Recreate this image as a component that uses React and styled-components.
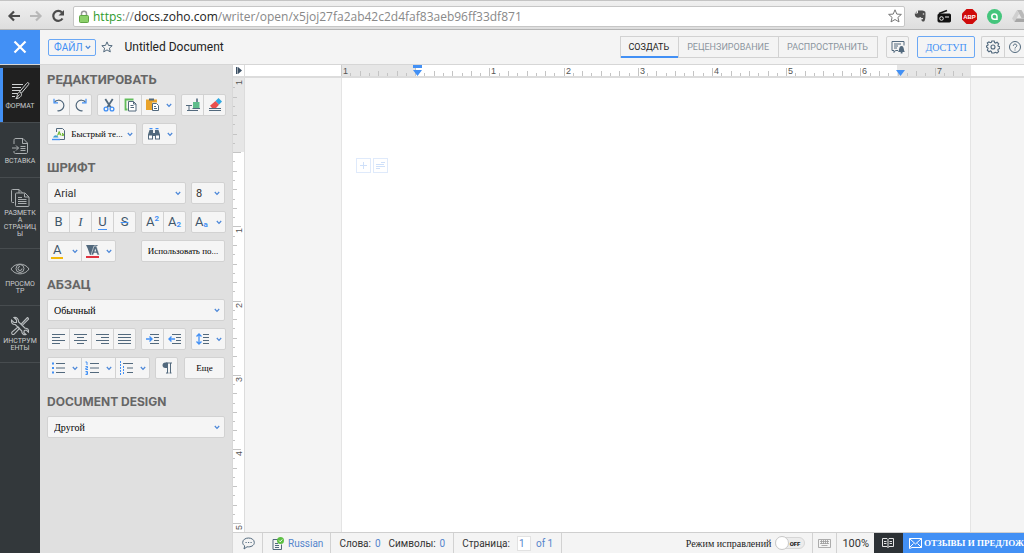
import { useState } from 'react';
import styled, { createGlobalStyle, css } from 'styled-components';

const blue = '#4290f5';
const slate = '#52697d';
const line = '#d2d2d2';
const sans = "Roboto, 'Liberation Sans', sans-serif";
const serif = "'Liberation Serif', serif";

const GlobalStyle = createGlobalStyle`
    * {
        box-sizing: border-box;
    }

    body {
        margin: 0;
        font-family: ${sans};
        font-size: 11px;
        color: #333;
        overflow: hidden;
    }

    button, input, select {
        margin: 0;
        padding: 0;
        border: 0;
        background: none;
        font: inherit;
        color: inherit;
    }

    svg {
        display: block;
        flex-shrink: 0;
    }
`;

// Layout

const Screen = styled.div`
    display: flex;
    flex-direction: column;
    height: 100vh;
    background: #f4f4f4;
`;

const Body = styled.div`
    display: flex;
    flex: 1;
    min-height: 0;
`;

const Editor = styled.main`
    display: flex;
    flex-direction: column;
    flex: 1;
    min-width: 0;
`;

// Browser bar

const BrowserBar = styled.div`
    display: flex;
    align-items: center;
    gap: 8px;
    height: 30px;
    padding: 2px 0 0 7px;
    background: linear-gradient(#f0f0f0, #dedede);
    border-top: 1px solid #c4c4c4;
    border-bottom: 1px solid #b4b4b4;
    overflow: hidden;
`;

const BareButton = styled.button`
    display: flex;
    align-items: center;
    justify-content: center;
    width: ${(props) => props.$width || 14}px;
    flex-shrink: 0;
`;

const Address = styled.div`
    display: flex;
    align-items: center;
    flex: 1;
    gap: 4px;
    height: 21px;
    padding: 0 2px 0 5px;
    background: #fff;
    border: 1px solid #c6c6c6;
    border-radius: 2px;
    font-family: 'Open Sans', sans-serif;
    font-size: 12px;
    color: #888;
    white-space: nowrap;
`;

const Url = styled.div`
    flex: 1;
`;

const Secure = styled.span`
    color: #2c9a2c;
`;

const Host = styled.span`
    color: #222;
`;

const Extensions = styled.div`
    display: flex;
    align-items: center;
    gap: 9px;
    width: 111px;
    flex-shrink: 0;
`;

// Header

const Header = styled.header`
    display: flex;
    align-items: center;
    height: 35px;
    flex-shrink: 0;
    background: #f4f4f4;
    border-bottom: 1px solid #d6d6d6;
    overflow: hidden;
`;

const CloseButton = styled.button`
    display: flex;
    align-items: center;
    justify-content: center;
    align-self: stretch;
    width: 40px;
    background: ${blue};
`;

const FileButton = styled.button`
    display: flex;
    align-items: center;
    gap: 3px;
    height: 17px;
    margin: 0 5px 0 8px;
    padding: 0 4px 0 5px;
    border: 1px solid #6ba8f5;
    border-radius: 2px;
    font-size: 10px;
    color: ${blue};
`;

const DocTitle = styled.h1`
    flex: 1;
    margin: 0 0 0 11px;
    font-size: 12px;
    font-weight: 400;
    color: #222;
`;

const Tabs = styled.nav`
    display: flex;
    height: 22px;
    border: 1px solid ${line};
`;

const Tab = styled.button`
    padding: 0 9px 0 8px;
    font-size: 9px;
    color: #8b959e;
    white-space: nowrap;

    &:not(:first-child) {
        border-left: 1px solid ${line};
    }

    ${(props) =>
        props.$active &&
        css`
            color: #222;
            box-shadow: 0 1px 0 ${blue}, inset 0 -1px 0 ${blue};
        `}
`;

const HeaderButton = styled.button`
    display: flex;
    align-items: center;
    justify-content: center;
    width: 23px;
    height: 22px;
    margin-left: 8px;
    border: 1px solid ${line};
    border-radius: 2px;
`;

const ShareButton = styled(HeaderButton)`
    width: 58px;
    border-color: #6ba8f5;
    font-family: ${serif};
    font-size: 10px;
    color: ${blue};
`;

const HeaderPair = styled.div`
    display: flex;
    width: 43px;
    height: 22px;
    margin-left: 6px;
    border: 1px solid ${line};
    border-right: 0;
    border-radius: 2px 0 0 2px;

    button + button {
        border-left: 1px solid ${line};
    }
`;

// Left rail

const Rail = styled.nav`
    width: 40px;
    flex-shrink: 0;
    padding-top: 3px;
    background: #33383b;
`;

const RailItem = styled.button`
    display: flex;
    flex-direction: column;
    align-items: center;
    justify-content: center;
    gap: 2px;
    width: 100%;
    min-height: 55px;
    padding: 10px 2px;
    border-bottom: 1px solid #474c4f;
    font-size: 7px;
    line-height: 7px;
    color: #c9cccd;
    text-transform: uppercase;

    ${(props) =>
        props.$active &&
        css`
            background: #202020;
            box-shadow: inset 3px 0 0 ${blue};
        `}
`;

// Format panel

const Panel = styled.aside`
    width: 193px;
    flex-shrink: 0;
    padding: 6px 7px 0;
    background: #e0e0e0;
    border-right: 1px solid #d8d8d8;
`;

const Section = styled.section`
    display: flex;
    flex-direction: column;
    gap: 7px;
    margin-bottom: 14px;
`;

const SectionTitle = styled.h2`
    margin: 0 0 -2px;
    font-size: 13px;
    font-weight: 700;
    line-height: 18px;
    color: #666;
    text-transform: uppercase;
    white-space: nowrap;
`;

const LatinTitle = styled(SectionTitle)`
    font-family: Inter, 'Liberation Sans', sans-serif;
    font-size: 12px;
`;

const Row = styled.div`
    display: flex;
    gap: 5px;
`;

const Group = styled.div`
    display: flex;
    height: 22px;
    background: #f5f5f5;
    border: 1px solid ${line};
    border-radius: 2px;
`;

const Tool = styled.button`
    display: flex;
    align-items: center;
    justify-content: ${(props) => (props.$menu ? 'space-between' : 'center')};
    width: ${(props) => (props.$menu ? 33 : 21)}px;
    padding: ${(props) => (props.$menu ? '0 3px' : '0')};

    &:not(:first-child) {
        width: ${(props) => (props.$menu ? 34 : 22)}px;
        border-left: 1px solid ${line};
    }
`;

const TextTool = styled.button`
    display: flex;
    align-items: center;
    justify-content: ${(props) => (props.$menu ? 'space-between' : 'center')};
    width: ${(props) => props.$width}px;
    height: 22px;
    padding: 0 3px;
    margin-left: ${(props) => (props.$end ? 'auto' : '0')};
    background: #f5f5f5;
    border: 1px solid ${line};
    border-radius: 2px;
    font-family: ${serif};
    font-size: 9px;
    color: #000;
    white-space: nowrap;
`;

const Picker = styled.label`
    display: grid;
    grid-template-columns: 1fr 10px;
    align-items: center;
    flex: ${(props) => (props.$narrow ? '0 0 34px' : '1')};
    height: 22px;
    background: #f5f5f5;
    border: 1px solid ${line};
    border-radius: 2px;

    select {
        grid-area: 1 / 1 / 2 / 3;
        width: 100%;
        height: 20px;
        padding-left: ${(props) => (props.$narrow ? 4 : 6)}px;
        appearance: none;
        font-family: ${(props) => (props.$serif ? serif : sans)};
        font-size: ${(props) => (props.$serif ? 10 : 11)}px;
        color: ${(props) => (props.$serif ? '#000' : '#333')};
    }

    svg {
        grid-area: 1 / 2;
        pointer-events: none;
    }
`;

// Rulers and page

const RulerRow = styled.div`
    display: flex;
    height: 13px;
    flex-shrink: 0;
    background: #fff;
    border-bottom: 2px solid #dcdcdc;
`;

const RulerCorner = styled.button`
    display: flex;
    align-items: center;
    justify-content: center;
    width: 12px;
    border-right: 1px solid #dcdcdc;
`;

const RulerTrack = styled.div`
    flex: 1;
    min-width: 0;
    margin: 0 53px 0 96px;
    overflow: hidden;
`;

const Workspace = styled.div`
    display: flex;
    flex: 1;
    min-height: 0;
    overflow: hidden;
`;

const SideRuler = styled.div`
    width: 12px;
    flex-shrink: 0;
    background: #fff;
    border-right: 1px solid #dcdcdc;
    overflow: hidden;
`;

const Page = styled.article`
    flex: 1;
    margin: 0 53px 0 96px;
    padding: 80px 14px;
    background: #fff;
    border: solid #e4e4e4;
    border-width: 0 1px;
`;

const InsertButtons = styled.div`
    display: flex;
    gap: 2px;
`;

const InsertButton = styled.button`
    display: flex;
    align-items: center;
    justify-content: center;
    width: 15px;
    height: 15px;
    border: 1px solid #dfeafb;
`;

// Status bar

const StatusBar = styled.footer`
    display: flex;
    height: 21px;
    flex-shrink: 0;
    background: #f4f4f4;
    border-top: 1px solid #cfcfcf;
    font-size: 10px;
    white-space: nowrap;
    overflow: hidden;
`;

const StatusCell = styled.div`
    display: flex;
    align-items: center;
    gap: 5px;
    padding: 0 8px;
    border-right: 1px solid ${line};
`;

const StatusButton = styled.button`
    display: flex;
    align-items: center;
    justify-content: center;
    gap: 4px;
    padding: 0 7px 0 9px;
    border-right: 1px solid ${line};
    color: #5584cc;
`;

const KeyboardButton = styled(StatusButton)`
    padding: 0 5px;
`;

const ZoomButton = styled(StatusButton)`
    padding: 0 5px;
    border-right: 0;
    font-size: 11px;
    color: #333;
`;

const Value = styled.span`
    color: #5584cc;
`;

const Counter = styled.span`
    display: flex;
    align-items: center;
    gap: 4px;

    & + & {
        margin-left: 3px;
    }
`;

const PageField = styled.label`
    display: flex;
    align-items: center;
    gap: 7px;

    input {
        width: 14px;
        height: 15px;
        padding-left: 1px;
        background: #fff;
        border: 1px solid #e2e2e2;
        color: #5584cc;
    }
`;

const Tracking = styled.label`
    display: flex;
    align-items: center;
    gap: 4px;
    margin-left: auto;
    padding-right: 7px;
    border-right: 1px solid ${line};
    font-family: ${serif};
    font-size: 10px;
    color: #222;
`;

const Switch = styled.span`
    display: flex;
    align-items: center;
    justify-content: space-between;
    flex-direction: ${(props) => (props.$on ? 'row-reverse' : 'row')};
    width: 30px;
    height: 12px;
    padding-right: 4px;
    background: #ececec;
    border: 1px solid #d6d6d6;
    border-radius: 6px;
    font-family: ${sans};
    font-size: 6px;
    font-weight: 900;

    &::before {
        content: '';
        width: 12px;
        height: 12px;
        margin-left: -1px;
        background: #fff;
        border: 1px solid #c8c8c8;
        border-radius: 50%;
    }

    input {
        appearance: none;
        width: 0;
        height: 0;
    }
`;

const ReaderButton = styled.button`
    display: flex;
    align-items: center;
    justify-content: center;
    width: 29px;
    background: #2d3236;
`;

const FeedbackButton = styled.button`
    display: flex;
    align-items: center;
    gap: 2px;
    padding: 0 0 0 6px;
    background: ${blue};
    font-family: ${serif};
    font-size: 9px;
    font-weight: 700;
    color: #fff;
`;

// Icons

const Svg = ({ w = 16, h = 16, stroke = slate, sw = 1, children }) => (
    <svg
        width={w}
        height={h}
        viewBox={`0 0 ${w} ${h}`}
        fill="none"
        stroke={stroke}
        strokeWidth={sw}
        aria-hidden="true"
    >
        {children}
    </svg>
);

const Chevron = ({ color = '#4a86d8' }) => (
    <Svg w={6} h={5} stroke={color} sw={1.2}>
        <path d="M.8 1 3 3.4 5.2 1" />
    </Svg>
);

const UndoIcon = ({ flip }) => (
    <Svg sw={1.2}>
        <g transform={flip ? 'translate(16 0) scale(-1 1)' : undefined}>
            <path d="M3.600 5C5.400 2.800 9 2.600 11.200 4.600c2.300 2.200 2.200 5.600 0 7.700C9.400 14 7.600 13.900 6.500 13.600" />
            <path d="M3 1.800v4h4" stroke={blue} />
        </g>
    </Svg>
);

const CutIcon = () => (
    <Svg sw={1.8}>
        <path d="M4.300 2 9.800 10.500M11.700 2 6.200 10.500" />
        <g stroke={blue} strokeWidth="1.3">
            <circle cx="5" cy="12" r="1.9" />
            <circle cx="11" cy="12" r="1.9" />
        </g>
    </Svg>
);

const CopyIcon = () => (
    <Svg>
        <path d="M10.500 2.500h-8v10h2" stroke="#62bd5b" strokeWidth="1.8" />
        <path d="M5.500 4.500h5l2.500 2.500v7H5.500z" fill="#fff" />
        <path d="M10.500 4.500V7H13M7.500 8.500h3M7.500 10.500h3.500" />
    </Svg>
);

const PasteIcon = () => (
    <Svg>
        <path d="M1 2.500h11v3H7V13H1z" fill="#e9a32b" stroke="none" />
        <path d="M4 1.500h5v2H4z" fill={slate} stroke="none" />
        <path d="M7.500 6.500h4l2 2v5h-6z" fill="#fff" />
        <path d="M9 9.500h2M9 11.500h3" />
    </Svg>
);

const PainterIcon = () => (
    <Svg>
        <path d="M8 5h6.500v6H8z" fill="#5fbd8b" stroke="none" />
        <path d="M12 1.500V5" strokeWidth="1.6" />
        <path d="M7.500 11.500H15M1 8.500h6M4 8.500v5M2 13.500h11" />
    </Svg>
);

const EraserIcon = () => (
    <Svg>
        <path d="M8.500 4 11.500 1 15 4.500 12 7.800z" fill="#2fa8e0" stroke="none" />
        <path d="M8.500 4 12 7.800 9 11H5L3 8.800z" fill="#e8504d" stroke="none" />
        <path d="M2 11.500h12M2 13.500h12" />
    </Svg>
);

const QuickTextIcon = () => (
    <Svg>
        <path d="M5.500 6V2.500h6l2 2v9H9" />
        <path d="M6.500 9.500 8.200 5.500l1.700 4M7.200 8h2M11 7.500c2-.5 1.500 2 1.500 2h-1.300c-.7-.9.3-1.200 1.300-1" stroke="#69b829" />
        <path d="M1 13.500h8" stroke={blue} strokeWidth="1.4" />
        <path d="M2 11.500c1.500-3 4-3 5.500 0z" fill="#3f9fd0" stroke="none" />
    </Svg>
);

const FindIcon = () => (
    <Svg>
        <path d="M2 13.500V8.500L3.500 4H7v9.500zM9 13.500V4h3.500L14 8.500v5z" fill={slate} stroke="none" />
        <path d="M6 7h4v3H6z" fill={slate} stroke="none" />
        <path d="M3 9.500h3v3H3zM10 9.500h3v3h-3z" fill="#fff" stroke="none" />
        <path d="M3.500 2.700h3M9.500 2.700h3" stroke={blue} strokeWidth="1.3" />
    </Svg>
);

const PilcrowIcon = () => (
    <Svg>
        <path d="M7 3h6M8.500 3v10M11.500 3v10M7 13h2.500M10.500 13h2" />
        <path d="M8.500 2.500H6.500C2.500 2.500 2.500 8 6.500 8h2z" fill={slate} stroke="none" />
    </Svg>
);

const Letter = styled.span`
    font-family: ${(props) => (props.$serif ? serif : sans)};
    font-size: 13px;
    font-weight: 400;
    font-style: ${(props) => (props.$serif ? 'italic' : 'normal')};
    line-height: 14px;
    color: #3f566a;
    border-bottom: ${(props) => (props.$bar ? `${props.$thick || 1}px solid ${props.$bar}` : '0')};
    padding: 0 ${(props) => (props.$thick ? 2 : 0)}px;
    white-space: nowrap;
`;

const Strike = styled(Letter)`
    text-decoration: line-through ${blue} 1px;
`;

const Mark = styled.span`
    font-size: 8px;
    font-weight: 700;
    color: ${blue};
    vertical-align: ${(props) => (props.$up ? '5px' : '-1px')};
    line-height: 1;
`;

const HighlightIcon = () => (
    <Svg w={15} h={15}>
        <path d="M1 1h12l-3 3-3 7H5L2.500 4z" fill={slate} stroke="none" />
        <path d="M6 11 9 2h2.500L14.500 11h-2.300l-.6-2H9l-.6 2z" fill={slate} stroke="#f5f5f5" strokeWidth=".6" />
        <path d="m10.300 4.500.9 3H9.400z" fill="#f5f5f5" stroke="none" />
        <path d="M1 13h13" stroke="#e0333f" strokeWidth="2" />
    </Svg>
);

const alignPaths = {
    left: 'M1 3.500h13M1 6.500h8M1 9.500h13M1 12.500h8',
    center: 'M1 3.500h13M4 6.500h7M1 9.500h13M4 12.500h7',
    right: 'M1 3.500h13M6 6.500h8M1 9.500h13M6 12.500h8',
    justify: 'M1 3.500h13M1 6.500h13M1 9.500h13M1 12.500h13',
};

const AlignIcon = ({ kind }) => (
    <Svg>
        <path d={alignPaths[kind]} />
    </Svg>
);

const IndentIcon = ({ out }) => (
    <Svg>
        <path d="M5 3.500h9M9 6.500h5M9 9.500h5M5 12.500h9" />
        <path
            d={out ? 'M8 8H2M4.500 5.500 2 8l2.500 2.500' : 'M1 8h6M4.500 5.500 7 8l-2.500 2.500'}
            stroke={blue}
            strokeWidth="1.4"
        />
    </Svg>
);

const SpacingIcon = () => (
    <Svg>
        <path d="M8 3.500h6M8 6.500h6M8 9.500h6M8 12.500h6" />
        <path d="M4 3v10M1.500 5.500 4 3l2.500 2.500M1.500 10.500 4 13l2.500-2.500" stroke={blue} strokeWidth="1.3" />
    </Svg>
);

const ListIcon = ({ kind }) => (
    <Svg>
        <path d={kind === 'levels' ? 'M4 3.500h10M8 8h6M8 12.500h6' : 'M5 3.500h9M5 8h9M5 12.500h9'} />
        {kind === 'dots' && (
            <path d="M1 3.500h2M1 8h2M1 12.500h2" stroke={blue} strokeWidth="2" />
        )}
        {kind === 'numbers' && (
            <path
                d="M.5 2h1.500v3M.5 6.500h2v1.500H.8v1.500h2.200M.5 11.500h2v3H.5M.8 13h1.700"
                stroke={blue}
            />
        )}
        {kind === 'levels' && (
            <path d="M1.500 1v14M4.500 6v8" stroke={blue} strokeDasharray="2 1" />
        )}
    </Svg>
);

const FormatRailIcon = () => (
    <Svg w={20} h={20} stroke="#d0d3d4">
        <path d="M2 3.500h11M2 6.500h9M2 9.500h8M2 12.500h6M2 15.500h3" />
        <path d="M18 1.500c1 .5 1 1.500.5 2.200L11.500 12 9.700 10.600 16.500 2.500c.5-.7 1-1 1.500-1z" fill="#202020" />
        <path d="m9.500 11 2 1.700c.5 2.800-2.500 4.800-5.500 5 1.200-1 1-2 1.200-3.300.2-1.700 1-2.900 2.300-3.400zM6 17.500l3.500-4" fill="#202020" />
    </Svg>
);

const InsertRailIcon = () => (
    <Svg w={20} h={20} stroke="#aaaeb0">
        <path d="M4 8V4.500c0-1.500.5-2 2-2h7l4.500 4.500v9c0 1-.5 1.500-1.500 1.500H5.500c-1 0-1.500-.5-1.500-1.500v-1" />
        <path d="M12.500 2.500V7.500h5M2 12h6.500M6 9.500 8.500 12 6 14.500M10.500 10.500h5M10.500 12.500h5M10.500 14.500h5" />
    </Svg>
);

const LayoutRailIcon = () => (
    <Svg w={20} h={20} stroke="#aaaeb0">
        <path d="M4 14.500H2.500c-1 0-1-.5-1-1v-11c0-1 .5-1 1-1H9l3.500 3.500M9 1.500V5" />
        <path d="M5.500 6c0-.7.3-1 1-1H15l4 4v8.500c0 .7-.3 1-1 1H6.500c-.7 0-1-.3-1-1z" fill="#33383b" />
        <path d="M14.500 5.500V9H19M8 9.500h4M8 11.500h8.500M8 13.500h8.500M8 15.500h8.500" />
    </Svg>
);

const EyeRailIcon = () => (
    <Svg w={20} h={20} stroke="#aaaeb0">
        <path d="M1 10c4-6.500 14-6.500 18 0-4 6.500-14 6.500-18 0z" />
        <circle cx="10" cy="9.5" r="4" />
        <path d="M10 7.500a2 2 0 1 0 2 2" />
    </Svg>
);

const ToolsRailIcon = () => (
    <Svg w={20} h={20} stroke="#bbbfc1" sw={1.1}>
        <path d="M4 1.500 6.500 4v2.500H4L1.500 4c-.5 2.500 1 4.800 3.800 4.500l6.500 6.500c-.3 2.500 2 4.200 4.200 3.500L13.800 16.500l.5-2 2-.5 2.200 2.200c.5-2.500-1-4.200-3.500-4L8.500 5.700C8.800 3 6.500 1 4 1.500z" />
        <path d="M17.500 1.500 11.300 8M18.800 2.800 12.500 9.200M17.500 1.500l1.300 1.300M8 11l1.500 1.500-5.500 5.800c-1.500.8-3-.8-2-2.200z" />
    </Svg>
);

const ticks = (count) =>
    Array.from({ length: count }, (_, i) => i).filter((i) => i > 0);

const INCH = 74.2;

const TopRuler = () => (
    <svg width="100%" height="11" aria-hidden="true">
        <rect width="75" height="11" fill="#e6e6e6" />
        <rect x="556" width="100%" height="11" fill="#e6e6e6" />
        <rect width="1" height="11" fill="#ccc" />
        {ticks(68).map((i) => {
            const height = i % 8 === 0 ? 8 : i % 2 === 0 ? 5 : 3;
            return (
                <rect key={i} x={Math.round((i * INCH) / 8)} y={11 - height} width="1" height={height} fill="#c4c4c4" />
            );
        })}
        {[1, null, 1, 2, 3, 4, 5, 6, 7].map((n, i) => (
            n && (
                <text key={i} x={Math.round(i * INCH) + 2} y="9" fontSize="9" fill="#555" fontFamily="Liberation Sans">
                    {n}
                </text>
            )
        ))}
        <path d="M72 0h9v3h-9zM72 5h9l-4.500 6z" fill={blue} />
        <path d="M555 5h9l-4.500 6z" fill={blue} />
    </svg>
);

const LeftRuler = () => (
    <svg width="11" height="700" aria-hidden="true">
        <rect width="11" height="74" fill="#e6e6e6" />
        {ticks(72).map((i) => (
            <rect key={i} y={Math.round((i * INCH) / 8)} width={i % 8 === 0 ? 8 : i % 2 === 0 ? 4 : 2} height="1" fill="#c4c4c4" />
        ))}
        {[1, null, 1, 2, 3, 4, 5].map((n, i) => (
            n && (
                <text
                    key={i}
                    transform={`translate(9 ${Math.round(i * INCH) + 7}) rotate(-90)`}
                    fontSize="9"
                    fill="#555"
                    fontFamily="Liberation Sans"
                >
                    {n}
                </text>
            )
        ))}
    </svg>
);

// \u200b marks where a long label may wrap
const railItems = [
    { label: 'Формат', Icon: FormatRailIcon },
    { label: 'Вставка', Icon: InsertRailIcon },
    { label: 'Разметк\u200bа страниц\u200bы', Icon: LayoutRailIcon },
    { label: 'Просмо\u200bтр', Icon: EyeRailIcon },
    { label: 'Инструм\u200bенты', Icon: ToolsRailIcon },
];

const modes = ['СОЗДАТЬ', 'РЕЦЕНЗИРОВАНИЕ', 'РАСПРОСТРАНИТЬ'];

function Browser() {
    return (
        <BrowserBar>
            <BareButton aria-label="Back">
                <Svg w={14} h={14} stroke="#4c4c4c" sw={2.2}>
                    <path d="M13 7H2.500M7 2.500 2.500 7 7 11.500" />
                </Svg>
            </BareButton>
            <BareButton aria-label="Forward">
                <Svg w={14} h={14} stroke="#b8b8b8" sw={2.2}>
                    <path d="M1 7h10.500M7 2.500 11.500 7 7 11.500" />
                </Svg>
            </BareButton>
            <BareButton aria-label="Reload">
                <Svg w={14} h={14} stroke="#4c4c4c" sw={2.2}>
                    <path d="M11.500 9.500A5 5 0 1 1 11 3.500" />
                    <path d="M13 1v5.500H7.500z" fill="#4c4c4c" stroke="none" />
                </Svg>
            </BareButton>
            <Address>
                <Svg w={10} h={13} stroke="#999">
                    <path d="M2.500 6V3.500c0-3 5-3 5 0V6" strokeWidth="1.5" />
                    <rect x=".5" y="5.5" width="9" height="7" rx="1" fill="#8cd06a" stroke="#5fa544" />
                </Svg>
                <Url>
                    <Secure>https</Secure>://<Host>docs.zoho.com</Host>/writer/open/x5joj27fa2ab42c2d4faf83aeb96ff33df871
                </Url>
                <BareButton aria-label="Bookmark">
                    <Svg w={14} h={14} stroke="#777">
                        <path d="m7 .8 1.800 4.300 4.600.3-3.500 3 1.100 4.500L7 10.500l-4 2.400 1.100-4.500-3.500-3 4.600-.3z" />
                    </Svg>
                </BareButton>
            </Address>
            <Extensions>
                <BareButton $width={14} aria-label="Evernote">
                    <Svg w={14} h={14} stroke="none">
                        <path d="M2 4 5 1.500h4c2 .5 3.500.5 3.500 2.500 0 3 0 6-1 8-1 1-3 .5-3-1s1-1 1.500-.5V9C8 9.500 8 8 7.500 8 6 9 4 9 3 8S1.500 5.500 2 4z" fill="#4d4d4d" />
                        <path d="M2 4h2.500V1.500" stroke="#eee" />
                        <circle cx="10.5" cy="5" r=".8" fill="#ddd" />
                    </Svg>
                </BareButton>
                <BareButton $width={16} aria-label="Radio">
                    <Svg w={14} h={14} stroke="#111">
                        <rect x="1" y="5" width="12.5" height="8" rx="1" fill="#111" />
                        <path d="M2 4.500 10 1.500" strokeWidth="1.5" />
                        <circle cx="4.5" cy="9.5" r="1.8" stroke="#eee" />
                        <path d="M8 8h4" stroke="#eee" />
                    </Svg>
                </BareButton>
                <BareButton $width={16} aria-label="Adblock">
                    <Svg w={15} h={15} stroke="none">
                        <path d="M4.500 0h6L15 4.500v6L10.500 15h-6L0 10.500v-6z" fill="#cf0a0a" />
                        <text x="7.5" y="9.5" textAnchor="middle" fontSize="6" fontWeight="700" fill="#fff" fontFamily="Liberation Sans">
                            ABP
                        </text>
                    </Svg>
                </BareButton>
                <BareButton $width={16} aria-label="Assistant">
                    <Svg w={15} h={15}>
                        <circle cx="7.5" cy="7.5" r="7.5" fill="#44c57c" stroke="none" />
                        <path d="M10 11V7.500a2.600 2.600 0 1 0-2.500 2.700H10" stroke="#fff" strokeWidth="1.5" />
                    </Svg>
                </BareButton>
                <BareButton $width={16} aria-label="Drive">
                    <Svg w={14} h={12} stroke="none">
                        <path d="M5 0h4.500L14 8h-4.500z" fill="#b9b9b9" />
                        <path d="M5 0 0 8.500 2.500 12 7 4z" fill="#cfcfcf" />
                        <path d="M4.500 8.500H14L12 12H2.500z" fill="#a6a6a6" />
                    </Svg>
                </BareButton>
            </Extensions>
        </BrowserBar>
    );
}

function TopBar() {
    const [mode, setMode] = useState(modes[0]);

    return (
        <Header>
            <CloseButton aria-label="Close">
                <Svg w={14} h={14} stroke="#fff" sw={2.2}>
                    <path d="m1.500 1.500 11 11M12.500 1.500l-11 11" />
                </Svg>
            </CloseButton>
            <FileButton>
                ФАЙЛ
                <Chevron />
            </FileButton>
            <BareButton $width={12} aria-label="Favourite">
                <Svg w={12} h={12}>
                    <path d="m6 .9 1.500 3.500 3.700.3-2.800 2.500.9 3.700L6 8.900l-3.300 2 .9-3.700L.8 4.700l3.700-.3z" />
                </Svg>
            </BareButton>
            <DocTitle>Untitled Document</DocTitle>

            <Tabs>
                {modes.map((name) => (
                    <Tab key={name} $active={name === mode} onClick={() => setMode(name)}>
                        {name}
                    </Tab>
                ))}
            </Tabs>
            <HeaderButton aria-label="Notifications">
                <Svg w={14} h={14}>
                    <path d="M7 10.500H4.500L3 12.500v-2H1v-9h12v4M3 4h7M3 6h4M3 8h3" />
                    <path d="M7 12c1.500-1 .5-6 3.500-6s2 5 3.500 6zM9.700 12h1.800v1.500H9.700z" fill={slate} stroke="none" />
                </Svg>
            </HeaderButton>
            <ShareButton>ДОСТУП</ShareButton>
            <HeaderPair>
                <BareButton $width={22} aria-label="Settings">
                    <Svg w={14} h={14} sw={1.1}>
                        <path d="m5.800 1h2.400l.4 1.600 1 .5 1.500-.8 1.600 1.600-.8 1.500.4 1 1.500.4v1.800l-1.500.5-.5 1 .8 1.500-1.600 1.500-1.500-.8-1 .4L8.200 13H5.800l-.4-1.700-1-.4-1.500.8-1.600-1.600.8-1.500-.5-1L.5 7.200V6l1.200-.5.4-1-.8-1.500L2.900 1.900l1.500.8 1-.4z" />
                        <circle cx="7" cy="7" r="2" />
                    </Svg>
                </BareButton>
                <BareButton $width={20} aria-label="Help">
                    <Svg w={12} h={12}>
                        <circle cx="6" cy="6" r="5.5" />
                        <path d="M4.300 4.800c0-2.400 3.500-2.200 3.500-.1C7.800 6 6 6 6 7.500M6 8.500v1" />
                    </Svg>
                </BareButton>
            </HeaderPair>
        </Header>
    );
}

function FormatPanel() {
    return (
        <Panel>
            <Section>
                <SectionTitle>Редактировать</SectionTitle>
                <Row>
                    <Group>
                        <Tool aria-label="Undo"><UndoIcon /></Tool>
                        <Tool aria-label="Redo"><UndoIcon flip /></Tool>
                    </Group>
                    <Group>
                        <Tool aria-label="Cut"><CutIcon /></Tool>
                        <Tool aria-label="Copy"><CopyIcon /></Tool>
                        <Tool $menu aria-label="Paste"><PasteIcon /><Chevron /></Tool>
                    </Group>
                    <Group>
                        <Tool aria-label="Format painter"><PainterIcon /></Tool>
                        <Tool aria-label="Clear formatting"><EraserIcon /></Tool>
                    </Group>
                </Row>
                <Row>
                    <TextTool $width={90} $menu>
                        <QuickTextIcon />
                        Быстрый те...
                        <Chevron />
                    </TextTool>
                    <Group>
                        <Tool $menu aria-label="Find"><FindIcon /><Chevron /></Tool>
                    </Group>
                </Row>
            </Section>

            <Section>
                <SectionTitle>Шрифт</SectionTitle>
                <Row>
                    <Picker>
                        <select aria-label="Font">
                            <option>Arial</option>
                        </select>
                        <Chevron />
                    </Picker>
                    <Picker $narrow>
                        <select aria-label="Font size">
                            <option>8</option>
                        </select>
                        <Chevron />
                    </Picker>
                </Row>
                <Row>
                    <Group>
                        <Tool><Letter>B</Letter></Tool>
                        <Tool><Letter $serif>I</Letter></Tool>
                        <Tool><Letter $bar={blue}>U</Letter></Tool>
                        <Tool><Strike>S</Strike></Tool>
                    </Group>
                    <Group>
                        <Tool><Letter>A<Mark $up>2</Mark></Letter></Tool>
                        <Tool><Letter>A<Mark>2</Mark></Letter></Tool>
                    </Group>
                    <Group>
                        <Tool $menu><Letter>A<Mark>a</Mark></Letter><Chevron /></Tool>
                    </Group>
                </Row>
                <Row>
                    <Group>
                        <Tool $menu><Letter $bar="#f2b90c" $thick={2}>A</Letter><Chevron /></Tool>
                        <Tool $menu aria-label="Highlight"><HighlightIcon /><Chevron /></Tool>
                    </Group>
                    <TextTool $width={84} $end>Использовать по...</TextTool>
                </Row>
            </Section>

            <Section>
                <SectionTitle>Абзац</SectionTitle>
                <Row>
                    <Picker $serif>
                        <select aria-label="Paragraph style">
                            <option>Обычный</option>
                        </select>
                        <Chevron />
                    </Picker>
                </Row>
                <Row>
                    <Group>
                        {Object.keys(alignPaths).map((kind) => (
                            <Tool key={kind} aria-label={`Align ${kind}`}><AlignIcon kind={kind} /></Tool>
                        ))}
                    </Group>
                    <Group>
                        <Tool aria-label="Indent"><IndentIcon /></Tool>
                        <Tool aria-label="Outdent"><IndentIcon out /></Tool>
                    </Group>
                    <Group>
                        <Tool $menu aria-label="Line spacing"><SpacingIcon /><Chevron /></Tool>
                    </Group>
                </Row>
                <Row>
                    <Group>
                        {['dots', 'numbers', 'levels'].map((kind) => (
                            <Tool key={kind} $menu aria-label={`List ${kind}`}><ListIcon kind={kind} /><Chevron /></Tool>
                        ))}
                    </Group>
                    <Group>
                        <Tool aria-label="Paragraph marks"><PilcrowIcon /></Tool>
                    </Group>
                    <TextTool $width={41} $end>Еще</TextTool>
                </Row>
            </Section>

            <Section>
                <LatinTitle>Document Design</LatinTitle>
                <Row>
                    <Picker $serif>
                        <select aria-label="Document design">
                            <option>Другой</option>
                        </select>
                        <Chevron />
                    </Picker>
                </Row>
            </Section>
        </Panel>
    );
}

function Status() {
    const [tracking, setTracking] = useState(false);

    return (
        <StatusBar>
            <StatusButton aria-label="Comments">
                <Svg w={13} h={13}>
                    <path d="M6.500 1C3.500 1 .7 2.700.7 5.500c0 1.500.8 2.600 2 3.400L2 12l3-2.200c4 .5 7.300-1.300 7.300-4.300 0-2.800-2.800-4.500-5.800-4.500z" />
                    <path d="M3.500 5.500h1.200M6 5.500h1.200M8.500 5.500h1.200" />
                </Svg>
            </StatusButton>
            <StatusButton>
                <Svg w={12} h={13}>
                    <path d="M6 2.500H1v10h8.500V7.500M3 6.500h3M3 8.500h4M3 10.500h4" />
                    <circle cx="8.5" cy="3.5" r="3.5" fill="#5cbf43" stroke="none" />
                    <path d="m7 3.500 1.200 1.300L10.200 2.500" stroke="#fff" />
                </Svg>
                Russian
            </StatusButton>
            <StatusCell>
                <Counter>Слова: <Value>0</Value></Counter>
                <Counter>Символы: <Value>0</Value></Counter>
            </StatusCell>
            <StatusCell>
                <PageField>
                    Страница:
                    <input defaultValue="1" />
                </PageField>
                <Value>of 1</Value>
            </StatusCell>

            <Tracking>
                Режим исправлений
                <Switch $on={tracking}>
                    <input type="checkbox" checked={tracking} onChange={() => setTracking(!tracking)} />
                    {tracking ? 'ON' : 'OFF'}
                </Switch>
            </Tracking>
            <KeyboardButton aria-label="Keyboard">
                <Svg w={13} h={9} stroke="#999">
                    <path d="M.5.5h12v8H.5zM2 2.500h9M2 4.500h9" strokeWidth=".8" />
                    <path d="M3.500 6.500h6M3.500 1v4M5.500 1v4M7.500 1v4M9.500 1v4" strokeWidth=".8" />
                </Svg>
            </KeyboardButton>
            <ZoomButton>100%</ZoomButton>
            <ReaderButton aria-label="Reader view">
                <Svg w={12} h={10} stroke="#e6e6e6">
                    <path d="M.5.5H5l1 1 1-1h4.500v8H7l-1 1-1-1H.5zM6 1.500v8M2 3.500h2.500M2 5.500h2.500M7.500 3.500H10M7.500 5.500H10" />
                </Svg>
            </ReaderButton>
            <FeedbackButton>
                <Svg w={13} h={11} stroke="#fff">
                    <path d="M.5.5h12v9H3L.5 10.500zM.5.5 6.500 6l6-5.500M.5 9.500l4-4M12.500 9.500l-4-4" />
                </Svg>
                ОТЗЫВЫ И ПРЕДЛОЖ
            </FeedbackButton>
        </StatusBar>
    );
}

export default function App() {
    return (
        <>
            <GlobalStyle />
            <Screen>
                <Browser />
                <TopBar />
                <Body>
                    <Rail>
                        {railItems.map(({ label, Icon }, i) => (
                            <RailItem key={label} $active={i === 0}>
                                <Icon />
                                {label}
                            </RailItem>
                        ))}
                    </Rail>
                    <FormatPanel />
                    <Editor>
                        <RulerRow>
                            <RulerCorner aria-label="Toggle ruler">
                                <Svg w={6} h={7} stroke="none">
                                    <path d="M0 0h1.500v7H0zM2 0l4 3.500L2 7z" fill="#3c5064" />
                                </Svg>
                            </RulerCorner>
                            <RulerTrack>
                                <TopRuler />
                            </RulerTrack>
                        </RulerRow>
                        <Workspace>
                            <SideRuler>
                                <LeftRuler />
                            </SideRuler>
                            <Page>
                                <InsertButtons>
                                    <InsertButton aria-label="Insert">
                                        <Svg w={7} h={7} stroke="#cfe0f9">
                                            <path d="M0 3.500h7M3.500 0v7" />
                                        </Svg>
                                    </InsertButton>
                                    <InsertButton aria-label="Templates">
                                        <Svg w={9} h={9} stroke="#cfe0f9">
                                            <path d="M5 1.500h4M0 3.500h8M0 5.500h9M0 7.500h4" />
                                        </Svg>
                                    </InsertButton>
                                </InsertButtons>
                            </Page>
                        </Workspace>
                        <Status />
                    </Editor>
                </Body>
            </Screen>
        </>
    );
}
